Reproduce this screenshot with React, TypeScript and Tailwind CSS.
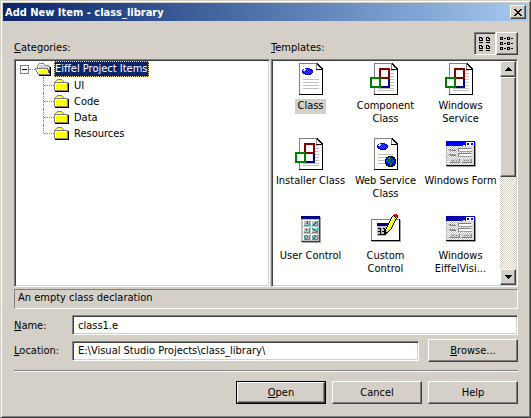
import type { ReactNode } from "react";
import clsx from "clsx";

const raised =
  "border border-t-white border-l-white border-r-[#404040] border-b-[#404040] shadow-[inset_-1px_-1px_0_#808080] bg-[#d4d0c8]";
const sunken =
  "border border-t-[#808080] border-l-[#808080] border-r-white border-b-white shadow-[inset_1px_1px_0_#404040,inset_-1px_-1px_0_#d4d0c8] bg-white";

/* Small bitmap: one character per pixel, looked up in the palette. */
const palette: Record<string, string> = {
  k: "#000000",
  g: "#808080",
  s: "#c0c0c0",
  w: "#ffffff",
  y: "#ffff00",
  e: "#e8e8d0",
  b: "#0000ff",
  n: "#000080",
  c: "#0080ff",
  G: "#008000",
  r: "#ff0000",
  t: "#008080",
  a: "#00ffff",
};

function Pixels({ rows, x = 0, y = 0 }: { rows: string[]; x?: number; y?: number }) {
  return (
    <g>
      {rows.flatMap((row, j) =>
        row.split("").map((ch, i) =>
          palette[ch] ? (
            <rect key={`${i}-${j}`} x={x + i} y={y + j} width="1" height="1" fill={palette[ch]} />
          ) : null,
        ),
      )}
    </g>
  );
}

function Sprite({ rows, className }: { rows: string[]; className?: string }) {
  const w = rows[0].length;
  return (
    <svg
      width={w}
      height={rows.length}
      viewBox={`0 0 ${w} ${rows.length}`}
      shapeRendering="crispEdges"
      className={clsx("shrink-0", className)}
      aria-hidden="true"
    >
      <Pixels rows={rows} />
    </svg>
  );
}

const closedFolder = [
  "...ggggg.......",
  "..geyeyeg......",
  ".geyeyeyeg.....",
  "gggggggggggggg.",
  "gwwwwwwwwwwwwgk",
  "gwyeyeyeyeyeygk",
  "gweyeyeyeyeyegk",
  "gwyeyeyeyeyeygk",
  "gweyeyeyeyeyegk",
  "gwyeyeyeyeyeygk",
  "gweyeyeyeyeyegk",
  "ggggggggggggggk",
  ".kkkkkkkkkkkkkk",
];

const openFolder = [
  "....ggggg.......",
  "...gwwwwwg......",
  "..gwsesesegggg..",
  "..gwesesesesesg.",
  "..gwsesesesesegk",
  "gggggggggggggegk",
  "gwwwwwwwwwwwgsgk",
  ".gwyeyeyeyeyekgk",
  ".gweyeyeyeyeygkk",
  "..gweyeyeyeyegkk",
  "..gwyeyeyeyeyegk",
  "...ggggggggggggk",
  "....kkkkkkkkkkkk",
];

const closeGlyph = ["kk....kk", ".kk..kk.", "..kkkk..", "...kk...", "..kkkk..", ".kk..kk.", "kk....kk"];
const upGlyph = ["...k...", "..kkk..", ".kkkkk.", "kkkkkkk"];
const downGlyph = [...upGlyph].reverse();

const blob = [
  "...bbbbb...",
  ".bwwcbcbbb.",
  "bwwcbcbcbbb",
  "bbcbcbcbcbn",
  "bbbcbcbcbcn",
  ".bbbcbcbbn.",
  "...bbnnnn..",
];

const globe = [
  "...kkkkk...",
  ".kbGGGbbkk.",
  ".bGGcGGbbk.",
  "kbGGGGbGbbk",
  "kccGGbbGGbk",
  "kbcbGGbGGbk",
  "kbbcbGGbGbk",
  "kbbbGGGbbbk",
  ".kbbbGGbbk.",
  ".kkbbGbbkk.",
  "...kkkkk...",
];

const pencil = [
  "..........rrr.",
  ".........krrrk",
  "........kykrrk",
  ".......kyyyksk",
  ".......kwyyyk.",
  "......kwyyyk..",
  "......kyyyyk..",
  ".....kwyyyk...",
  ".....kyyyyk...",
  "....kwyyyk....",
  "....kyyyyk....",
  "...kwyyyk.....",
  "...kyyyyk.....",
  "..kwyyyk......",
  "..kyyyyk......",
  ".kwyyyk.......",
  ".kswyk........",
  ".kssk.........",
  ".kkk..........",
  ".kk...........",
  ".k............",
];

const controlCells = [
  ["wwwwwww", "wssttsg", "wsswtsg", "wssttsg", "wssssag", "wgggggg"],
  ["wwwwwww", "wssssag", "wsssttg", "wssttsg", "wsttssg", "wgggggg"],
  ["wwwwwww", "wsssssg", "wsstssg", "wsstssg", "wsssssg", "wgggggg"],
  ["wwwwwww", "wtsssag", "wsttssg", "wssttsg", "wsssstg", "wgggggg"],
  ["wwwwwww", "wsttssg", "wtsstsg", "wtsstsg", "wsttssg", "wgggggg"],
  ["wwwwwww", "wssttsg", "wtsstsg", "wsttsag", "wsttssg", "wgggggg"],
];

function IconFrame({ children }: { children: ReactNode }) {
  return (
    <svg width="32" height="32" viewBox="0 0 32 32" shapeRendering="crispEdges" aria-hidden="true">
      {children}
    </svg>
  );
}

function Page() {
  return (
    <g>
      <path d="M4 0H22L28 6V32H4Z" fill="#fff" />
      <path d="M4 0H22V1H5V31H4Z" fill="#808080" />
      <path d="M4 31H28V32H4ZM27 6H28V32H27Z" fill="#000" />
      <Pixels x={21} rows={["gk.....", "gkk....", "gwkk...", "gwskk..", "gwwskk.", "gwwwwkk", "kkkkkkk"]} />
      <path d="M8 16H24V17H8ZM8 19H24V20H8ZM8 22H24V23H8ZM8 25H24V26H8Z" fill="#c0c0c0" />
    </g>
  );
}

function ClassIcon() {
  return (
    <IconFrame>
      <Page />
      <Pixels x={7} y={5} rows={blob} />
    </IconFrame>
  );
}

function ComponentIcon() {
  return (
    <IconFrame>
      <Page />
      <path d="M20 7H24V8H20ZM20 10H24V11H20ZM20 13H24V14H20ZM8 27H24V28H8Z" fill="#c0c0c0" />
      <rect x="10" y="15" width="9" height="9" fill="#fff" stroke="#000080" strokeWidth="2" />
      <rect x="10" y="6" width="9" height="9" fill="#fff" stroke="#800000" strokeWidth="2" />
      <rect x="1" y="15" width="9" height="9" fill="#fff" stroke="#008000" strokeWidth="2" />
    </IconFrame>
  );
}

function WebIcon() {
  return (
    <IconFrame>
      <Page />
      <Pixels x={7} y={5} rows={blob} />
      <Pixels x={15} y={18} rows={globe} />
    </IconFrame>
  );
}

function FormIcon({ id }: { id: string }) {
  return (
    <IconFrame>
      <defs>
        <pattern id={`${id}-face`} width="2" height="2" patternUnits="userSpaceOnUse">
          <rect width="2" height="2" fill="#fff" />
          <path d="M0 0H1V1H0ZM1 1H2V2H1Z" fill="#c0c0c0" />
        </pattern>
        <pattern id={`${id}-bar`} width="2" height="2" patternUnits="userSpaceOnUse">
          <rect width="2" height="2" fill="#0000ff" />
          <path d="M0 0H1V1H0ZM1 1H2V2H1Z" fill="#0000a0" />
        </pattern>
      </defs>
      <rect x="2" y="4" width="29" height="25" fill="#a0a0a0" />
      <rect x="1" y="3" width="29" height="25" fill="#000" />
      <rect x="1" y="3" width="28" height="24" fill="#c0c0c0" />
      <rect x="2" y="8" width="27" height="19" fill={`url(#${id}-face)`} />
      <rect x="1" y="3" width="29" height="5" fill={`url(#${id}-bar)`} />
      <Pixels x={18} y={4} rows={["...wwwwwwww", "...wbbwwbbw", "...wbbwwbbw", "ww.wwwwwwww"]} />
      <path d="M4 11H6V12H4ZM5 12H11V13H5ZM7 11H8V12H7ZM9 11H10V12H9ZM4 16H6V17H4ZM5 17H11V18H5ZM7 16H8V17H7ZM9 16H10V17H9Z" fill="#808080" />
      <path d="M13 10H26V11H14V13H13ZM13 15H26V16H14V18H13Z" fill="#808080" />
      <path d="M14 11H26V13H14ZM14 16H26V18H14Z" fill="#fff" />
      <path d="M13 13H27V14H13ZM13 18H27V19H13Z" fill="#a0a0a0" />
      <rect x="5" y="21" width="10" height="4" fill="#d0d0d0" />
      <rect x="17" y="21" width="10" height="4" fill="#d0d0d0" />
      <path d="M5 24H15V25H5ZM14 21H15V25H14ZM7 22H9V23H7ZM11 22H12V23H11ZM17 24H27V25H17ZM26 21H27V25H26ZM19 22H20V23H19ZM21 22H22V23H21ZM23 22H24V23H23Z" fill="#808080" />
    </IconFrame>
  );
}

function UserControlIcon() {
  return (
    <IconFrame>
      <rect x="7" y="4" width="19" height="26" fill="#a0a0a0" />
      <rect x="6" y="3" width="19" height="26" fill="#404040" />
      <rect x="6" y="3" width="18" height="25" fill="#c0c0c0" />
      <rect x="6" y="3" width="19" height="3" fill="#000080" />
      {controlCells.map((rows, i) => (
        <Pixels key={i} x={8 + (i % 2) * 8} y={7 + Math.floor(i / 2) * 7} rows={rows} />
      ))}
    </IconFrame>
  );
}

function CustomControlIcon() {
  return (
    <IconFrame>
      <rect x="2" y="7" width="29" height="22" fill="#a0a0a0" />
      <rect x="1" y="6" width="29" height="22" fill="#000" />
      <rect x="1" y="6" width="28" height="21" fill="#808080" />
      <rect x="2" y="7" width="27" height="20" fill="#fff" />
      <rect x="7" y="10" width="12" height="3" fill="#000080" />
      <rect x="7" y="13" width="9" height="10" fill="#c0c0c0" />
      <path d="M8 15H11V16H8ZM10 15H11V18H10ZM8 18H11V19H8ZM10 18H11V21H10ZM13 15H15V16H13ZM14 15H15V18H14ZM12 18H15V19H12ZM14 19H15V21H14ZM8 21H15V22H8Z" fill="#000" />
      <Pixels x={14} y={1} rows={pencil} />
    </IconFrame>
  );
}

const templates: { label: string; icon: ReactNode; selected?: boolean }[] = [
  { label: "Class", icon: <ClassIcon />, selected: true },
  { label: "Component\nClass", icon: <ComponentIcon /> },
  { label: "Windows\nService", icon: <ComponentIcon /> },
  { label: "Installer Class", icon: <ComponentIcon /> },
  { label: "Web Service\nClass", icon: <WebIcon /> },
  { label: "Windows Form", icon: <FormIcon id="form" /> },
  { label: "User Control", icon: <UserControlIcon /> },
  { label: "Custom\nControl", icon: <CustomControlIcon /> },
  { label: "Windows\nEiffelVisi...", icon: <FormIcon id="vision" /> },
];

const largeGlyph = ["kkk.", "k.kk", "k..k", "kkkk", "....", "kkkk"];
const smallGlyph = ["kkk...", "k.k.kk", "kkk..."];

function ViewGlyph({ small }: { small?: boolean }) {
  return (
    <svg width="14" height="14" viewBox="0 0 14 14" shapeRendering="crispEdges" aria-hidden="true">
      {small
        ? [0, 5, 10].flatMap((y) => [0, 7].map((x) => <Pixels key={`${x}-${y}`} x={x} y={y} rows={smallGlyph} />))
        : [0, 8].flatMap((y) => [1, 8].map((x) => <Pixels key={`${x}-${y}`} x={x} y={y} rows={largeGlyph} />))}
    </svg>
  );
}

function DialogButton({ children, primary, className }: { children: ReactNode; primary?: boolean; className?: string }) {
  return (
    <span className={clsx("flex h-[23px] w-[90px] shrink-0", primary && "border border-black", className)}>
      <button type="button" className={clsx("flex-1 leading-[13px]", raised)}>
        {children}
      </button>
    </span>
  );
}

function Key({ children }: { children: string }) {
  return <span className="underline decoration-1 underline-offset-1">{children}</span>;
}

export default function App() {
  return (
    <main className="border border-t-[#d4d0c8] border-l-[#d4d0c8] border-r-[#404040] border-b-[#404040] bg-[#d4d0c8] p-[2px] font-['DejaVu_Sans_Condensed','Noto_Sans',sans-serif] text-[11px] leading-[13px] text-black shadow-[inset_1px_1px_0_#fff,inset_-1px_-1px_0_#808080]">
      <header className="flex h-[18px] items-center justify-between bg-linear-to-r from-[#0a246a] to-[#a6caf0] pr-[2px] pl-[2px]">
        <h1 className="text-[11px] font-bold text-white">Add New Item - class_library</h1>
        <button type="button" aria-label="Close" className={clsx("flex h-[14px] w-4 items-center justify-center", raised)}>
          <Sprite rows={closeGlyph} />
        </button>
      </header>

      <div className="pt-[11px] pr-[10px] pb-[11px] pl-[11px]">
        <div className="grid grid-cols-[256fr_247fr] gap-x-px">
          <div className="flex h-[27px] items-start pt-[9px]">
            <span id="categories"><Key>C</Key>ategories:</span>
          </div>
          <div className="flex h-[27px] items-start justify-between">
            <span id="templates" className="pt-[9px]"><Key>T</Key>emplates:</span>
            <div className="flex">
              <button
                type="button"
                aria-label="Large icons"
                aria-pressed="true"
                className="flex h-[23px] w-[22px] items-center justify-center border border-t-[#808080] border-r-white border-b-white border-l-[#808080] shadow-[inset_1px_1px_0_#404040]"
              >
                <ViewGlyph />
              </button>
              <button type="button" aria-label="Small icons" className={clsx("flex h-[23px] w-[22px] items-center justify-center", raised)}>
                <ViewGlyph small />
              </button>
            </div>
          </div>

          <div className={clsx("h-[228px] p-px", sunken)}>
            <ul role="tree" aria-labelledby="categories" className="pl-1">
              <li role="treeitem" aria-expanded="true" aria-selected="true">
                <div className="flex h-4 items-center">
                  <button type="button" aria-label="Collapse" className="flex size-[9px] items-center justify-center border border-[#808080]">
                    <span className="h-px w-[5px] bg-black" />
                  </button>
                  <span className="w-[6px] border-t border-dotted border-[#808080]" />
                  <Sprite rows={openFolder} />
                  <span className="ml-[3px] h-4 border border-dotted border-[#f5db95] bg-[#0a246a] pr-px text-white">
                    Eiffel Project Items
                  </span>
                </div>
                <ul role="group" className="pl-[23px]">
                  {["UI", "Code", "Data", "Resources"].map((name, i, all) => (
                    <li key={name} role="treeitem" className="flex h-4 items-center">
                      <span
                        className={clsx(
                          "w-0 border-l border-dotted border-[#808080]",
                          i === all.length - 1 ? "h-2 self-start" : "h-4",
                        )}
                      />
                      <span className="w-[10px] border-t border-dotted border-[#808080]" />
                      <Sprite rows={closedFolder} />
                      <span className="pl-[5px]">{name}</span>
                    </li>
                  ))}
                </ul>
              </li>
            </ul>
          </div>

          <div className={clsx("flex h-[228px] p-px", sunken)}>
            <div role="listbox" aria-labelledby="templates" className="grid flex-1 grid-cols-[repeat(auto-fill,75px)] auto-rows-[75px] overflow-hidden pt-[2px]">
              {templates.map(({ label, icon, selected }) => (
                <button key={label} type="button" role="option" aria-selected={!!selected} className="flex flex-col items-center">
                  {icon}
                  <span className={clsx("mt-1 px-[2px] pb-[2px] whitespace-pre", selected && "bg-[#d4d0c8]")}>{label}</span>
                </button>
              ))}
            </div>
            <div className="flex w-4 flex-col bg-[repeating-conic-gradient(#d4d0c8_0_25%,#fff_0_50%)] bg-[length:2px_2px]">
              <button type="button" aria-label="Scroll up" className={clsx("flex h-4 items-center justify-center", raised)}>
                <Sprite rows={upGlyph} />
              </button>
              <div className={clsx("h-[100px]", raised)} />
              <button type="button" aria-label="Scroll down" className={clsx("mt-auto flex h-4 items-center justify-center", raised)}>
                <Sprite rows={downGlyph} />
              </button>
            </div>
          </div>
        </div>

        <p className="mt-[2px] h-5 border border-t-[#808080] border-r-white border-b-white border-l-[#808080] pt-px pl-[3px]">
          An empty class declaration
        </p>

        <div className="mt-[6px] flex h-5 items-center">
          <label htmlFor="name" className="w-[58px] shrink-0"><Key>N</Key>ame:</label>
          <input id="name" defaultValue="class1.e" className={clsx("h-5 min-w-0 flex-1 pl-[5px] outline-none", sunken)} />
        </div>
        <div className="mt-1 flex h-[23px] items-center">
          <label htmlFor="location" className="w-[58px] shrink-0"><Key>L</Key>ocation:</label>
          <input
            id="location"
            defaultValue={"E:\\Visual Studio Projects\\class_library\\"}
            className={clsx("h-5 min-w-0 flex-1 pl-[5px] outline-none", sunken)}
          />
          <DialogButton className="ml-[9px]"><Key>B</Key>rowse...</DialogButton>
        </div>

        <hr className="mt-2 h-[2px] border-t border-b border-t-[#808080] border-b-white" />

        <div className="mt-[9px] flex justify-end gap-[6px]">
          <DialogButton primary><Key>O</Key>pen</DialogButton>
          <DialogButton>Cancel</DialogButton>
          <DialogButton>Help</DialogButton>
        </div>
      </div>
    </main>
  );
}
